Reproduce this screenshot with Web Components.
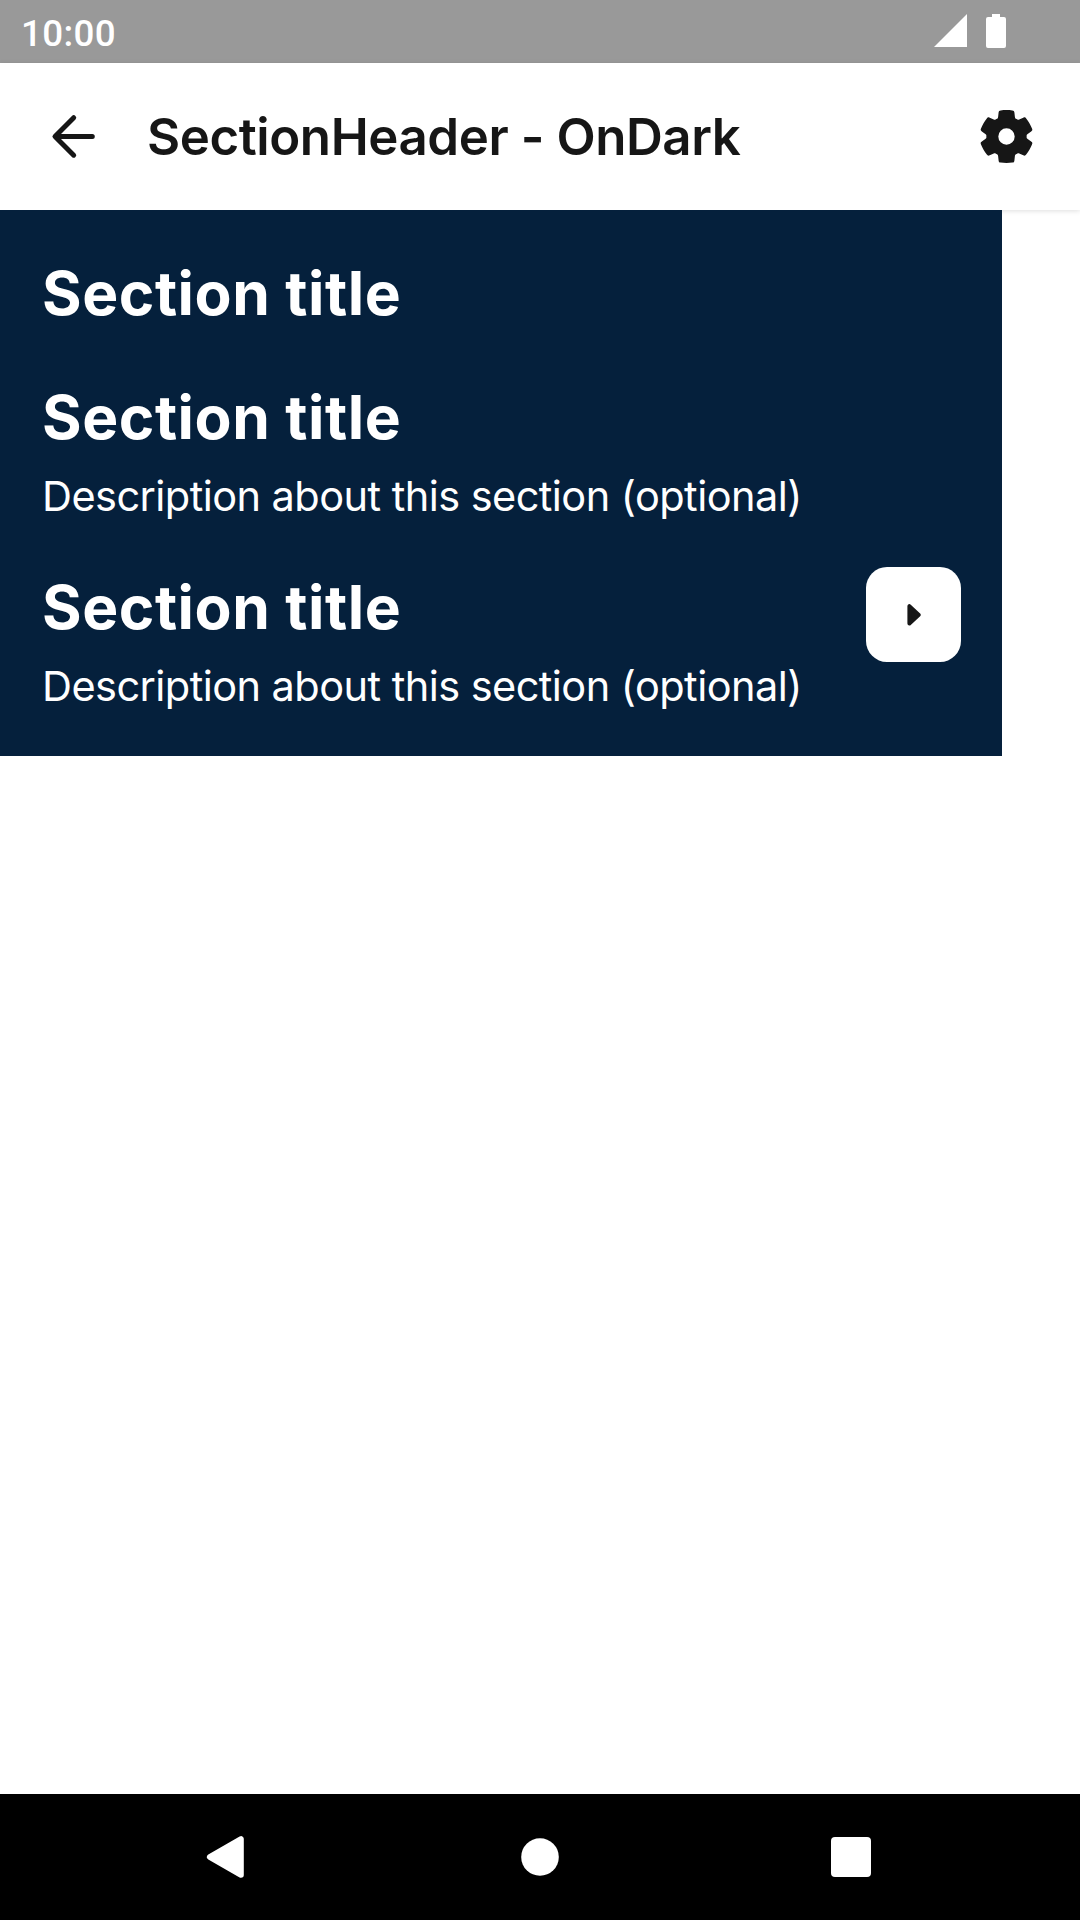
<!DOCTYPE html>
<html lang="en">
<head>
<meta charset="utf-8">
<title>SectionHeader - OnDark</title>
<style>
  html, body { margin: 0; height: 100%; background: #fff; }
  body { font-family: Inter, "Noto Sans", sans-serif; overflow: hidden; }
</style>
</head>
<body>
<phone-screen>
  <status-bar slot="status">10:00</status-bar>
  <app-bar slot="bar">SectionHeader - OnDark</app-bar>
  <dark-panel>
    <section-header>Section title</section-header>
    <section-header>Section title<span slot="description">Description about this section (optional)</span></section-header>
    <section-header>Section title<span slot="description">Description about this section (optional)</span><arrow-button slot="action"></arrow-button></section-header>
  </dark-panel>
  <nav-bar slot="nav"></nav-bar>
</phone-screen>
<script>
const define = (name, html) => customElements.define(name, class extends HTMLElement {
  constructor() {
    super();
    this.attachShadow({ mode: "open" }).innerHTML = html;
  }
});

// Outline of the settings gear: one tooth profile repeated six times around the origin.
function gearPath() {
  const tooth = [[-10.1,-17.5],[-9.1,-17.7],[-8.5,-18.4],[-8.4,-19.6],[-7.9,-23.9],[-7.7,-25.6],[-7.2,-25.9],[-5.8,-26.1],
    [-2.3,-26.6],[2.3,-26.6],[5.8,-26.1],[7.2,-25.9],[7.7,-25.6],[7.9,-23.9],[8.4,-19.6],[8.5,-18.4],[9.1,-17.7],[10.1,-17.5]];
  let d = "";
  for (let k = 0; k < 6; k++) {
    const a = k * Math.PI / 3, c = Math.cos(a), s = Math.sin(a);
    const p = tooth.map(([x, y]) => (x * c - y * s).toFixed(2) + " " + (x * s + y * c).toFixed(2));
    d += `${k ? "L" : "M"}${p[0]}C${p[1]} ${p[2]} ${p[3]}L${p[4]}C${p[5]} ${p[6]} ${p[7]}C${p[8]} ${p[9]} ${p[10]}C${p[11]} ${p[12]} ${p[13]}L${p[14]}C${p[15]} ${p[16]} ${p[17]}`;
  }
  return d + "ZM8.2 0A8.2 8.2 0 1 0 -8.2 0A8.2 8.2 0 1 0 8.2 0Z";
}

define("phone-screen", `
<style>
  :host { display: flex; flex-direction: column; width: 1080px; height: 1920px; background: #fff; }
  main { flex: 1; display: flex; flex-direction: column; align-items: flex-start; position: relative; }
</style>
<slot name="status"></slot><slot name="bar"></slot><main><slot></slot></main><slot name="nav"></slot>`);

define("status-bar", `
<style>
  :host { display: flex; align-items: center; height: 63px; box-sizing: border-box; padding: 0 74px 0 21px; background: #999; color: #fff;
    font: 500 36.75px/63px Roboto, sans-serif; letter-spacing: 0.35px; }
  span { flex: 1; padding-top: 3px; }
  svg { display: block; }
</style>
<span><slot></slot></span>
<svg width="72" height="63" viewBox="934 0 72 63" fill="#fff"><path d="M934 47H967V14Z"/><path d="M992 14H1000V17H1004Q1006 17 1006 19V46Q1006 48 1004 48H988Q986 48 986 46V19Q986 17 988 17H992Z"/></svg>`);

define("app-bar", `
<style>
  :host { display: flex; align-items: center; gap: 42px; height: 147px; box-sizing: border-box; padding: 0 42px; background: #fff; color: #161616;
    box-shadow: 0 1px 5px rgba(0,0,0,.13); }
  h1 { flex: 1; margin: 0; font-size: 51px; font-weight: 600; line-height: 64px; white-space: nowrap; letter-spacing: -0.43px; }
  svg { display: block; flex: none; }
</style>
<svg width="63" height="63" viewBox="42 105 63 63" fill="none" stroke="#161616" stroke-width="5" stroke-linecap="round" stroke-linejoin="round"><path d="M92.3 136.5H55.3M73.7 117.7L55 136.5L73.7 155.2"/></svg>
<h1><slot></slot></h1>
<svg width="63" height="63" viewBox="-31.5 -31.5 63 63" fill="#161616" fill-rule="evenodd"><path d="${gearPath()}"/></svg>`);

define("dark-panel", `
<style>
  :host { display: flex; flex-direction: column; width: 1002px; height: 546px; box-sizing: border-box; padding: 21px 0; background: #05203c; color: #fff; }
</style><slot></slot>`);

define("section-header", `
<style>
  :host { display: flex; align-items: flex-start; justify-content: space-between; padding: 21px 41px 21px 42px; }
  h2 { margin: 0; font-size: 60.5px; font-weight: 700; line-height: 82px; white-space: nowrap; letter-spacing: 0.55px; }
  ::slotted([slot="description"]) { display: block; padding-top: 10.5px; font-size: 41.5px; line-height: 55.5px; white-space: nowrap; letter-spacing: -0.55px; }
</style>
<div><h2><slot></slot></h2><slot name="description"></slot></div>
<slot name="action"></slot>`);

define("arrow-button", `
<style>
  :host { display: flex; align-items: center; justify-content: center; width: 95px; height: 95px; margin-top: 1px; border-radius: 21px; background: #fff; }
  svg { display: block; }
</style>
<svg width="95" height="95" viewBox="866 567 95 95" fill="#161616" stroke="#161616" stroke-width="4" stroke-linejoin="round"><path d="M909.4 606.2V623.6L918.8 614.9Z"/></svg>`);

define("nav-bar", `
<style>
  :host { display: block; height: 126px; background: #000; }
  svg { display: block; }
</style>
<svg width="1080" height="126" viewBox="0 1794 1080 126" fill="#fff">
  <path d="M209.7 1857L241 1839V1875Z" stroke="#fff" stroke-width="5.6" stroke-linejoin="round"/>
  <circle cx="540" cy="1857" r="18.8"/><rect x="831" y="1837" width="40" height="40" rx="4"/></svg>`);
</script>
</body>
</html>
